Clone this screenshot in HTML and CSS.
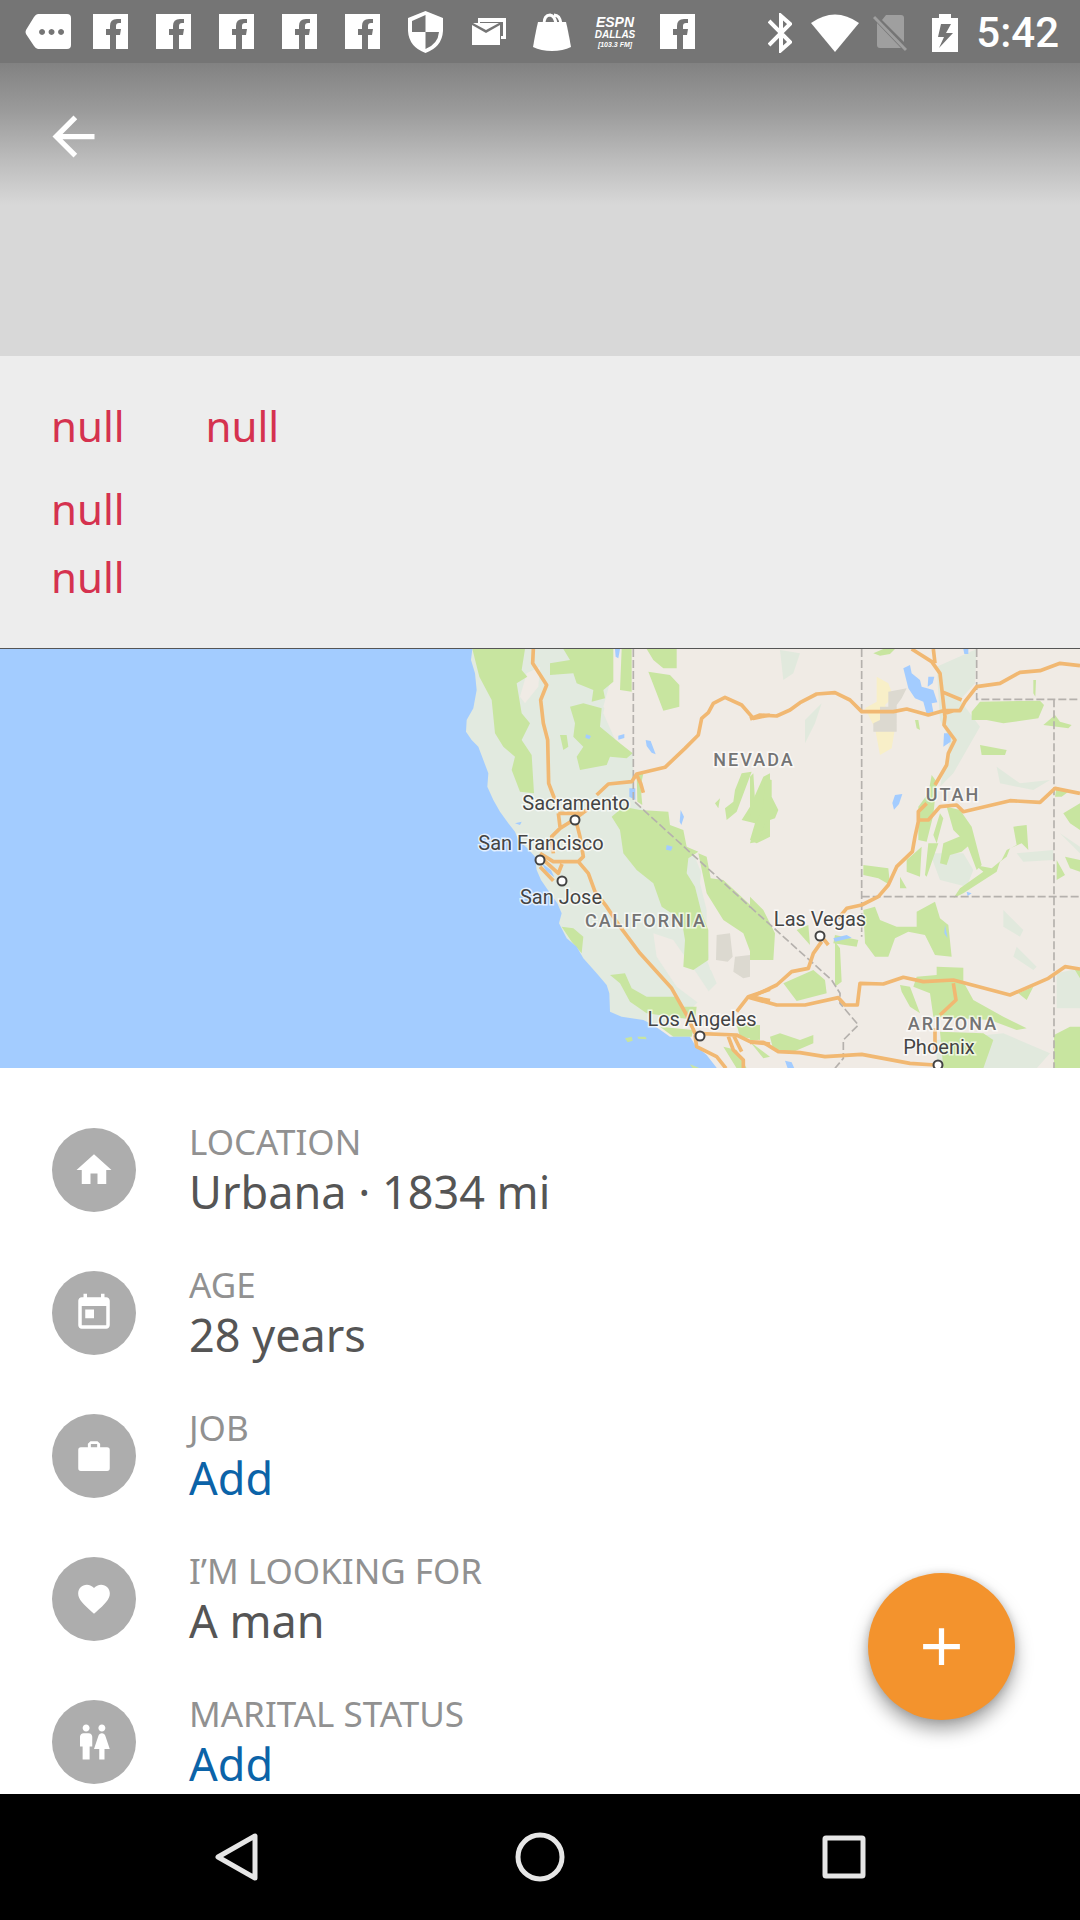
FILE: index.html
```html
<!DOCTYPE html>
<html lang="en">
<head>
<meta charset="utf-8">
<meta name="viewport" content="width=device-width, initial-scale=1">
<title>Profile</title>
<link rel="stylesheet" href="styles.css">
</head>
<body>
<svg class="defs" width="0" height="0" aria-hidden="true">
  <symbol id="fb" viewBox="0 0 35 35"><path fill-rule="evenodd" d="M0 0H35V35H23V21H27L28 15H23V12Q23 9 26 9H28V5H24Q17 5 17 12V15H13V21H17V35H0Z"/></symbol>
</svg>

<div class="status">
  <div class="status-notes">
    <svg width="46" height="36" viewBox="0 0 46 36"><path fill-rule="evenodd" d="M13 0H42Q46 0 46 4V31Q46 35 42 35H13Q11 35 9 32L1 20Q0 18 1 16L9 3Q11 0 13 0ZM17 15a3 3 0 1 0 .1 0ZM26.500 15a3 3 0 1 0 .1 0ZM36 15a3 3 0 1 0 .1 0Z"/></svg>
    <svg width="35" height="35"><use href="#fb"/></svg>
    <svg width="35" height="35"><use href="#fb"/></svg>
    <svg width="35" height="35"><use href="#fb"/></svg>
    <svg width="35" height="35"><use href="#fb"/></svg>
    <svg width="35" height="35"><use href="#fb"/></svg>
    <svg width="35" height="42" viewBox="0 0 35 42"><path fill-rule="evenodd" d="M17.500 0L35 7V20Q34 36 17.500 42Q1 36 0 20V7ZM17.500 4V21H31Q30 33 17.500 38V21H4V10Z"/></svg>
    <svg width="34" height="28" viewBox="0 0 34 28"><path d="M6 0H34V21H29V18H31V4H8V6H6ZM0 7L14 15L28 7V27H0ZM1 5H27L14 12Z"/></svg>
    <svg width="38" height="38" viewBox="0 0 38 38"><path d="M5 9H33Q35 17 38 34Q30 38 19 38T0 34Q3 17 5 9Z"/><path d="M11 11Q11 2 17 2Q22 3 23 11M21 2Q27 2 28 11" fill="none" stroke="#fff" stroke-width="3"/></svg>
    <svg class="radio-logo" width="48" height="34" viewBox="0 0 48 34"><text x="24" y="12" font-size="14">ESPN</text><text x="24" y="23" font-size="10">DALLAS</text><text x="24" y="32" font-size="7">[103.3 FM]</text></svg>
    <svg width="35" height="35"><use href="#fb"/></svg>
  </div>
  <div class="status-system">
    <svg width="24" height="40" viewBox="0 0 24 40"><path d="M1 8L22 29L13 37V3L22 11L1 32" fill="none" stroke="#fff" stroke-width="4"/></svg>
    <svg width="48" height="38" viewBox="0 0 48 38"><path d="M0 9Q24-8 48 9L24 38Z"/></svg>
    <svg class="dim" width="34" height="38" viewBox="0 0 34 38"><path d="M13 1H28Q31 1 31 4V28L9 6ZM4 9L28 34H7Q4 34 4 31Z"/><path d="M1 3L33 36" fill="none" stroke="#fff" stroke-width="3"/></svg>
    <svg width="26" height="40" viewBox="0 0 26 40"><path fill-rule="evenodd" d="M7 1H19V5H26V39H0V5H7ZM9 11L6 24H12L7 35L21 20H14L19 11Z"/></svg>
    <time>5:42</time>
  </div>
</div>

<header class="cover">
  <button class="back" aria-label="Back"><svg width="63" height="63" viewBox="0 0 24 24"><path d="M20 11H7.830l5.590-5.590L12 4l-8 8 8 8 1.410-1.410L7.830 13H20z"/></svg></button>
</header>

<section class="summary">
  <p><span>null</span><span>null</span></p>
  <p>null</p>
  <p>null</p>
</section>

<svg class="map" viewBox="0 649 1080 419" role="img" aria-label="Map of the western United States">
  <rect y="649" width="1080" height="419" fill="#f0ebe5"/>
  <g transform="translate(440 640) scale(.33333)">
    <path fill="#e2eae0" d="M60 27H500L515 110L490 200L530 250L580 330V480L760 640L810 760L900 850L800 960L830 1030L700 1160H500L200 800L60 400Z"/>
    <path fill="#f0ebe5" d="M480 27H580V340L530 310L490 220L510 130ZM260 100l40-20l-5 60l-40 50l-15-20ZM790 630l60 60-20 40 60 100v120l-80 40-10-100 0-80-20-80ZM640 880l60 20 70 100 40 60-20 40-80-60-60-90Z"/>
    <g class="park">
      <path d="M97 27H255L245 90L262 110L230 130L245 220L270 250L245 300L275 345L282 460L240 455L215 390L225 350L190 320L165 280L155 180L118 110Z"/>
      <path d="M330 70L390 60L370 27H520V125L490 150L495 175L455 185L460 150L410 130L400 100L330 105ZM545 27H575V155L540 150ZM390 200L430 190L485 205L480 260L540 310L578 340L560 355L510 350L500 375L420 390L410 350L430 320L400 290L405 250ZM360 285l20 0 5 35-15 10Z"/>
      <path d="M620 27H710V85L670 85L640 60ZM625 95L690 105L718 135V200L670 212L650 160Z"/>
      <path d="M515 530L550 500L600 510L685 515L690 555L730 570L740 620L775 635L745 655L740 700L765 740L785 820L805 870V960L760 990L730 980L735 900L725 840L665 800L640 730L590 690L550 640L540 570Z"/>
      <path d="M775 640L800 650L812 715L850 720L990 850V960L940 960L910 880L850 840L800 760Z"/>
      <path d="M365 860L400 865L430 890L425 940L395 905ZM510 1005L555 1000L575 1045L620 1070L705 1070L725 1100L770 1100L765 1140L620 1120L570 1085L540 1030ZM660 1160L760 1170L755 1190L700 1190ZM890 1155L960 1155L960 1200L900 1190ZM850 1220l40 10 30 55h-30Z"/>
      <path d="M905 400L935 395L890 515L860 540L855 505L880 485L885 450ZM970 410L990 400V590L950 610L930 600L945 550L905 540L930 500ZM825 490l15-15-5 30Z"/>
      <path d="M590 400l20 0-8 40 5 55-15-10Z"/>
    </g>
    <path fill="#dcd9d0" d="M830 885l40-5 8 70-15 15-35-5ZM885 950l45-5 0 65-20 5-30-20Z"/>
    <path class="water" d="M0 27H97L93 60L105 100L110 150L100 205L80 240L78 275L95 300L115 320L130 360L145 400L142 440L160 480L180 515L205 550L225 575L235 600L262 625L285 650L290 690L303 720L320 745L352 790L365 820L357 850L380 895L410 920L430 955L470 1000L500 1035L508 1060L510 1115L545 1130L610 1140L640 1155L690 1190L750 1190L765 1215L800 1245L835 1290H-1320V27Z"/>
    <path class="water" d="M525 27h15l-5 28-8-5ZM438 283l15 5-5 10-12-5ZM535 287l18-5 0 12-18 5ZM617 300l15 3 15 40-12-5-15-20ZM568 445l18 0 0 35-18-10ZM722 510l10 20-8 25-5-10ZM680 615l18 5-5 12-15-3ZM305 670l28 20 10 22-25-20ZM225 550l20-5-5 10Z"/>
    <path class="park" d="M555 1195l20-5 3 12-15 5ZM592 1190l25 0 3 8-25-2ZM750 1273l30 12-20 3Z"/>
    <path class="border" d="M580 27V482L990 855"/>
    <path class="road" d="M280 27L278 70L320 135L302 180L310 250L323 300L326 430L345 480M990 225L940 235L905 195L855 172L820 190L805 218L785 235L775 285L735 325L675 382L590 402L575 425L505 432L470 465M590 405l12 25 8 28M440 510L400 540L360 565L335 590L340 640M355 520L360 560M355 520H430M410 550L420 590L430 650L415 665H340L300 640M300 680L340 722M300 650L355 700L366 672M415 665L445 700L465 755L500 800L540 860L600 940L695 1045L740 1125L765 1180L890 1185L930 1205L990 1212M765 1185L770 1220L830 1250L858 1285M865 1190L880 1230L910 1260V1285M880 1185L905 1235M890 1115L925 1070L990 1048M930 1070L990 1082"/>
  </g>
  <g transform="translate(750 640) scale(.33333)">
    <path fill="#e1e9dd" d="M560 80L680 27L675 130L630 180L690 260L650 330L610 400L570 440L600 300L570 240ZM90 30l60 10-20 60-30 20ZM165 240l50-50-20 60-30 60ZM740 380l70 50 90-10-50 30-100-20ZM800 640l110-10v30l-90 5ZM760 810l60 60-10 20-50-30ZM800 920l60 60-10 10-60-40ZM920 1000l70-15v120l-70 0ZM560 1200l200-20 140 60-40 45H560ZM930 580l60 40v20ZM540 640l100 0 30 50-20 50-80-20Z"/>
    <path fill="#f8efc8" d="M380 110l35 20 15 40-25 25 30 70-10 60-35 20-15-80-30-60 35-20Z"/>
    <path fill="#dcd9d0" d="M415 155l55-10-15 30-15 20v80h-70v-25l20-10v-40h25Z"/>
    <g class="park">
      <path d="M370 40l30-13h35l-15 15-30 5ZM665 215L690 185L870 182L882 195L865 235L760 250L710 240L665 240ZM690 315l80 15-5 15-70 0ZM880 255l35-30 15 20 35 10-10 10ZM850 120l8 0-2 50-6-10ZM495 240l10 0 5 30-10-5Z"/>
      <path d="M545 405l15 20-10 100-20 80-25-5 0-100 30-40ZM570 520l10 15-20 75-10-25ZM590 500l40 10 35 50 30 115-15 15-30-80-40-40ZM580 610l60-25 30 20-35 30-35 10-10 30-20-5ZM535 610l30 0-35 100-5-5ZM470 660l45-40-5 90-40-15ZM790 560l40-5 5 75-20-20-35 15-10 25-20 15-10 30-70 45-30 20-30 15 20-30 70-50-25-20 50 10 30-25 15-30 30-15ZM340 675l75 10 5 50-35-20-45-10ZM450 710l20 35-20 0Z"/>
      <path d="M340 810l35-10 15 40 50 20 60 0 0-45 55-30 15 50 25 20 10 95-50-5-30-60-50-10-40 20-20 55-40 0-30-40ZM255 885l70 15-5 20-70-10ZM255 905l15 20 5 100-20 15ZM140 870l35-15 5 60Z"/>
      <path d="M100 1030L190 990L225 1020L230 1060L140 1083ZM500 1010L560 1005L560 980L640 983V1025L670 1080L760 1130L830 1165L800 1170L720 1140L550 1130L540 1060L490 1040ZM450 1035l30 5 30 80-30-20-25-45ZM570 1175L700 1180L730 1200L700 1285H580ZM0 770L40 810L75 880L70 960H0ZM0 410L10 400L15 480L0 530ZM45 415l20 5 0 50 20 40-10 25-30 10-20 60-25 5 20-65 20-50ZM60 1190l30-10 60 20 40-15 0 25-70 30-50-10ZM0 1150l25 20 0 30-25 0ZM0 1205l60 45-20 5Z"/>
      <path d="M940 520l50-30v80l-30-20ZM920 440l35 15-20 15-20 0ZM920 660l25 45-25 15ZM945 650l45 10v35l-30-10ZM960 1160l30 0v125H912V1185ZM805 1060l45-20-20 40ZM975 990l15-5v30Z"/>
    </g>
    <path class="water" d="M460 85L480 75L485 100L510 120L515 140L550 150L562 187L545 190L550 215L530 222L520 185L495 175L475 145ZM582 280l20 0 0 25-22 15ZM435 465l22-3-10 30-15 17-5-20ZM640 27h15v15l-12 0ZM650 755l15 5-12 8ZM585 855l8 40-10-15ZM250 895l40-10 15 8-50 12ZM105 1262l20 5 8 18h-20ZM535 110l18 0-5 20-15 10Z"/>
    <path class="border" d="M335 27V890M680 27V178H990M912 178V1285M335 770H990M0 800L245 1020L270 1060V1090L325 1155L280 1200V1255L255 1285"/>
    <path class="road" d="M0 237L30 225L80 228L120 210L150 188L200 162L255 158L300 180L335 215H430L470 207L535 225L580 212H630L645 185L680 140L750 130L810 97L870 92L930 70L990 77M485 27L545 65L570 100L585 230L582 255L615 300L595 340L590 375L555 435M550 27L555 70M575 155L635 180M585 220L610 212M530 490L505 515V545L495 590L487 635L440 680L415 735L385 770L335 795L290 805L265 835M505 540H535L570 500L620 495L640 515L780 482L870 487L915 445L990 460M215 905L190 940L175 985L125 995L80 1035L0 1073L80 1095H165L265 1073L285 1095H322L330 1030L400 1032L460 1012L520 1025L610 1020L780 1065L895 1015L945 980L990 987M610 1030L618 1080L570 1125M555 1165V1230M0 1207L40 1207L85 1235L150 1238L225 1250L335 1243L480 1270L555 1275M215 890l20 25"/>
  </g>
  <g class="states">
    <text x="754" y="766">NEVADA</text><text x="953" y="801">UTAH</text><text x="646" y="927">CALIFORNIA</text><text x="953" y="1030">ARIZONA</text>
  </g>
  <g class="cities">
    <text x="576" y="810">Sacramento</text><text x="541" y="850">San Francisco</text><text x="561" y="904">San Jose</text><text x="820" y="926">Las Vegas</text><text x="702" y="1026">Los Angeles</text><text x="939" y="1054">Phoenix</text>
  </g>
  <g class="pins">
    <circle cx="575" cy="820" r="4.500"/><circle cx="540" cy="860" r="4.500"/><circle cx="562" cy="881" r="4.500"/><circle cx="820" cy="936" r="4.500"/><circle cx="700" cy="1036" r="4.500"/><circle cx="938" cy="1065" r="4.500"/>
  </g>
</svg>

<dl class="facts">
  <div class="fact">
    <span class="badge"><svg width="42" height="42" viewBox="0 0 24 24"><path d="M10 20v-6h4v6h5v-8h3L12 3 2 12h3v8z"/></svg></span>
    <div><dt>LOCATION</dt><dd>Urbana · 1834 mi</dd></div>
  </div>
  <div class="fact">
    <span class="badge"><svg width="42" height="42" viewBox="0 0 24 24"><path d="M19 3h-1V1h-2v2H8V1H6v2H5c-1.110 0-1.990.9-1.990 2L3 19c0 1.100.89 2 2 2h14c1.100 0 2-.9 2-2V5c0-1.100-.9-2-2-2zm0 16H5V8h14v11zM7 10h5v5H7z"/></svg></span>
    <div><dt>AGE</dt><dd>28 years</dd></div>
  </div>
  <div class="fact">
    <span class="badge"><svg width="42" height="42" viewBox="0 0 24 24"><path fill-rule="evenodd" d="M4.500 7H8.500V5L10 3.500H14L15.500 5V7H19.500Q21 7 21 8.500V19Q21 20.500 19.500 20.500H4.500Q3 20.500 3 19V8.500Q3 7 4.500 7ZM10.200 5.200V7H13.800V5.200Z"/></svg></span>
    <div><dt>JOB</dt><dd><a href="#job">Add</a></dd></div>
  </div>
  <div class="fact">
    <span class="badge"><svg width="38" height="38" viewBox="0 0 24 24"><path d="M12 21.350l-1.450-1.320C5.400 15.360 2 12.280 2 8.500 2 5.420 4.420 3 7.500 3c1.740 0 3.410.81 4.500 2.090C13.090 3.810 14.760 3 16.500 3 19.580 3 22 5.420 22 8.500c0 3.780-3.400 6.860-8.550 11.540L12 21.350z"/></svg></span>
    <div><dt>I’M LOOKING FOR</dt><dd>A man</dd></div>
  </div>
  <div class="fact">
    <span class="badge"><svg width="42" height="42" viewBox="0 0 24 24"><path d="M5.500 22v-7.500H4V9c0-1.100.9-2 2-2h3c1.100 0 2 .9 2 2v5.500H9.500V22h-4zM18 22v-6h3l-2.540-7.630C18.180 7.550 17.420 7 16.560 7h-.12c-.86 0-1.630.55-1.900 1.370L12 16h3v6h3zM7.500 6c1.110 0 2-.89 2-2s-.89-2-2-2-2 .89-2 2 .89 2 2 2zm9 0c1.110 0 2-.89 2-2s-.89-2-2-2-2 .89-2 2 .89 2 2 2z"/></svg></span>
    <div><dt>MARITAL STATUS</dt><dd><a href="#marital">Add</a></dd></div>
  </div>
</dl>

<button class="fab" aria-label="Add"><svg width="63" height="63" viewBox="0 0 24 24"><path d="M19 13h-6v6h-2v-6H5v-2h6V5h2v6h6v2z"/></svg></button>

<nav class="navbar">
  <button aria-label="Back"><svg width="50" height="50" viewBox="0 0 50 50"><path d="M44 4V46L7 25Z"/></svg></button>
  <button aria-label="Home"><svg width="50" height="50" viewBox="0 0 50 50"><circle cx="25" cy="25" r="22"/></svg></button>
  <button aria-label="Recent apps"><svg width="50" height="50" viewBox="0 0 50 50"><rect x="6" y="6" width="38" height="38" rx="1"/></svg></button>
</nav>
</body>
</html>
```
FILE: styles.css
```css
* { box-sizing: border-box; }

body {
  margin: 0;
  min-height: 100vh;
  display: flex;
  flex-direction: column;
  background: #fff;
  font-family: "Noto Sans", sans-serif;
}

.defs { position: absolute; }

button {
  padding: 0;
  border: 0;
  background: none;
  display: flex;
  align-items: center;
  justify-content: center;
}

svg { display: block; }

/* System status bar */
.status {
  height: 63px;
  padding: 0 21px 0 16px;
  display: flex;
  justify-content: space-between;
  background: #757575;
}

.status svg { fill: #fff; }

.status-notes {
  display: grid;
  grid-auto-flow: column;
  grid-auto-columns: 63px;
  place-items: center;
}

.status-system {
  display: grid;
  grid-template-columns: repeat(4, 55px) auto;
  place-items: center;
}

.status .dim { opacity: 0.3; }

.status time {
  padding-left: 4px;
  color: #fff;
  font: 500 42px/65px Roboto, sans-serif;
}

.radio-logo {
  font-family: "Liberation Sans", sans-serif;
  font-style: italic;
  font-weight: 700;
  text-anchor: middle;
}

/* Cover area */
.cover {
  height: 293px;
  padding: 42px;
  background: linear-gradient(#828282 0, #9a9a9a 47px, #bcbcbc 97px, #d8d8d8 142px);
}

.back svg,
.fab svg,
.badge svg { fill: #fff; }

.summary {
  padding: 36px 51px 37px;
  border-bottom: 1px solid #555;
  background: #ededed;
  color: #d5324f;
  font-size: 42px;
  line-height: 68px;
}

.summary p { margin: 0; }

.summary p:first-child {
  display: flex;
  gap: 81px;
  margin-bottom: 15px;
}

/* Map */
.map {
  width: 100%;
  height: auto;
  font-family: Roboto, sans-serif;
  text-anchor: middle;
}

.park { fill: #c8e5a0; }
.water { fill: #a3ccff; }

.border {
  fill: none;
  stroke: #b5b1ad;
  stroke-width: 5;
  stroke-dasharray: 24 9;
}

.road {
  fill: none;
  stroke: #f1b872;
  stroke-width: 11;
  stroke-linejoin: round;
}

.states,
.cities {
  paint-order: stroke;
  stroke: #ffffffb0;
  stroke-width: 3px;
}

.states {
  fill: #747474;
  font-size: 18px;
  font-weight: 500;
  letter-spacing: 2px;
}

.cities {
  fill: #444;
  font-size: 20px;
}

.pins {
  fill: #fff;
  stroke: #444;
  stroke-width: 2px;
}

/* Profile facts */
.facts {
  margin: 0;
  padding: 52px 52px 2px;
  display: flex;
  flex-direction: column;
  gap: 43px;
}

.fact {
  display: flex;
  align-items: center;
  gap: 53px;
}

.badge {
  width: 84px;
  height: 84px;
  flex: none;
  display: flex;
  align-items: center;
  justify-content: center;
  border-radius: 50%;
  background: #adadad;
}

dt {
  color: #919191;
  font-size: 35px;
  line-height: 44px;
}

dd {
  margin: 0;
  color: #555;
  font-size: 45px;
  line-height: 56px;
}

dd a {
  color: #0b63a8;
  text-decoration: none;
}

.fab {
  position: fixed;
  right: 65px;
  bottom: 200px;
  width: 147px;
  height: 147px;
  border-radius: 50%;
  background: #f3932d;
  box-shadow: 0 10px 18px rgba(0, 0, 0, 0.35), 0 0 8px rgba(0, 0, 0, 0.15);
}

/* System navigation bar */
.navbar {
  height: 126px;
  margin-top: auto;
  display: grid;
  grid-template-columns: repeat(3, 304px);
  justify-content: center;
  background: #000;
}

.navbar svg {
  fill: none;
  stroke: #e6e6e6;
  stroke-width: 5;
  stroke-linejoin: round;
}
```
